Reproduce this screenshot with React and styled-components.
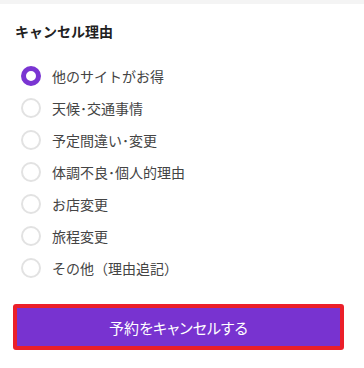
import React, { useState } from "react";
import styled, { createGlobalStyle } from "styled-components";

const GlobalStyle = createGlobalStyle`
  html, body {
    margin: 0;
    padding: 0;
    background: #fff;
    font-family: "Noto Sans CJK JP", "Noto Sans", sans-serif;
  }
`;

const reasons = [
  "他のサイトがお得",
  "天候･交通事情",
  "予定間違い･変更",
  "体調不良･個人的理由",
  "お店変更",
  "旅程変更",
  "その他（理由追記）",
];

const App = () => {
  const [selected, setSelected] = useState(0);
  return (
    <>
      <GlobalStyle />
      <Page>
        <TopStrip />
        <Panel>
          <Title>キャンセル理由</Title>
          <List>
            {reasons.map((r, i) => (
              <Row key={r} onClick={() => setSelected(i)}>
                <Radio checked={selected === i} />
                <Label>{r}</Label>
              </Row>
            ))}
          </List>
          <CancelButton>予約をキャンセルする</CancelButton>
        </Panel>
      </Page>
    </>
  );
};

export default App;

const Page = styled.div`
  width: 364px;
  height: 368px;
  background: #fff;
  overflow: hidden;
`;

const TopStrip = styled.div`
  height: 4px;
  background: #f4f4f4;
`;

const Panel = styled.div`
  padding: 16px 13px 0 15px;
  display: flex;
  flex-direction: column;
`;

const Title = styled.h2`
  margin: 0;
  font-size: 14px;
  font-weight: 700;
  color: #222;
  line-height: 22px;
`;

const List = styled.div`
  display: flex;
  flex-direction: column;
  margin-top: 18px;
`;

const Row = styled.div`
  display: flex;
  align-items: center;
  height: 32px;
  gap: 11px;
  cursor: pointer;
`;

const Radio = styled.span`
  box-sizing: border-box;
  width: 20px;
  height: 20px;
  margin-left: 6px;
  border-radius: 50%;
  background: #fff;
  border: ${(p) => (p.checked ? "5px solid #7a35d2" : "2px solid #e2e2e2")};
`;

const Label = styled.span`
  font-size: 14px;
  color: #444;
  line-height: 20px;
`;

const CancelButton = styled.button`
  box-sizing: border-box;
  margin-top: 20px;
  width: 331px;
  height: 46px;
  margin-left: -2px;
  border: 4px solid #eb1f2a;
  border-radius: 3px;
  background: #7833d0;
  color: #fff;
  font-family: "Noto Sans CJK JP", "Noto Sans", sans-serif;
  font-size: 15px;
  font-feature-settings: "palt";
  padding: 0;
  cursor: pointer;
`;
